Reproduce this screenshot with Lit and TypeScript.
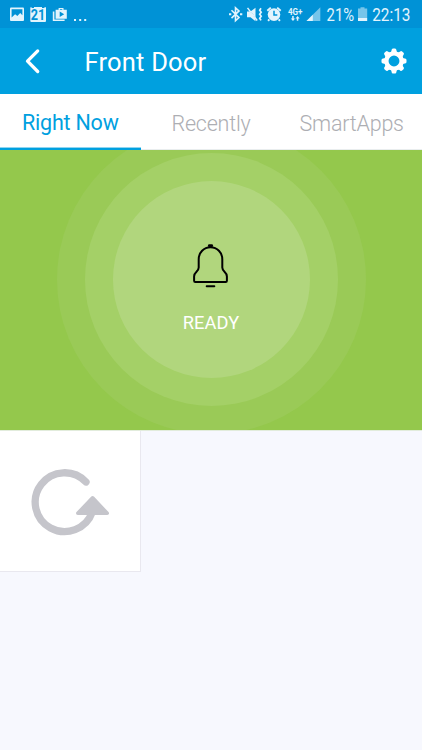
import { LitElement, html, css, svg } from "lit";
import { customElement, state } from "lit/decorators.js";

@customElement("status-bar")
class StatusBar extends LitElement {
  static styles = css`
    :host { display: flex; justify-content: space-between; height: 28px; background: #0092d6; }
    svg { display: block; }
    text { font-family: Roboto, sans-serif; fill: #e2f4fd; }
    .bold { font-weight: 700; }
    .date { fill: #0092d6; font-weight: 700; }
    .w { fill: #e2f4fd; }
    .blue { fill: #0092d6; }
    .dim { fill: #76c5ea; }
    .line { fill: none; stroke: #e2f4fd; }
  `;
  render() {
    return html`
      <svg width="100" height="28" viewBox="0 0 100 28">
        <rect class="w" x="10" y="7.5" width="14" height="13.5" rx="1" />
        <path class="blue" d="M11.6 9.2h10.8v6l-2.2-2.2-2.8 3-2.3-1.7-3.5 3.3z" />
        <rect class="w" x="30.3" y="7" width="15.7" height="15" rx="1" />
        <path class="blue" d="M31.5 7h2.5v1h-2.5zM42 7h2.5v1H42z" />
        <text class="date" x="30.8" y="19.8" font-size="14.5" textLength="14.5" lengthAdjust="spacingAndGlyphs">21</text>
        <path class="line" stroke-width="1.6" d="M53.6 11.5v8.8h11" />
        <path class="w" d="M55.6 9.8h3v-1.7h4.900v1.7h3.300v9H55.600z" />
        <path class="blue" d="M59.9 9.2h2.400v.7h-2.400zM59.700 11.400l4.500 2.800-4.500 2.900z" />
        <path class="w" d="M74 18.900h2v2H74zM79.200 18.900h2v2h-2zM84.200 18.900h2v2h-2z" />
      </svg>
      <svg width="200" height="28" viewBox="222 0 200 28">
        <path class="line" stroke-width="1.6" d="M231.500 10.300l7.500 7.300-3.500 3.200V7.800l3.500 3.100-7.500 7.200" />
        <path class="w" d="M229 13.300h2.300v2H229zM240 13.300h2.300v2H240z" />
        <path class="w" d="M247 11.400h3.500l5-3.700v13.500l-5-4H247z" />
        <path d="M246.800 6.800l10 13" stroke="#0092d6" stroke-width="1" />
        <path class="line" stroke-width="1.5" d="M247.500 7.900l9.700 12.600" />
        <path class="line" stroke-width="1.700" d="M261 8.200l-1.300 2 1.500 2-1.500 2 1.500 2-1.500 2 1.300 2.200" />
        <circle class="w" cx="274" cy="14.600" r="6.300" />
        <path class="line" stroke-width="1.900" d="M267.300 10.800l3.500-3.200M280.700 10.800l-3.500-3.200M269.300 19.400l-1.200 1.500M278.700 19.400l1.200 1.500" />
        <path d="M274 10.700v4.200h3.300" fill="none" stroke="#0092d6" stroke-width="1.500" />
        <text class="bold" x="288" y="14.600" font-size="8.800" textLength="14.500" lengthAdjust="spacingAndGlyphs">4G+</text>
        <path class="w" d="M290.800 18.400h1.400v-2.400h1.500v2.400h1.400l-2.100 2.500zM295.500 18.400l2.100-2.500 2.100 2.500h-1.400v2.400h-1.500v-2.400z" />
        <path class="dim" d="M306.500 21L320.300 7.200V21z" />
        <path class="w" d="M306.500 21l6.300-6.300V21z" />
        <text x="326.600" y="20.700" font-size="18" textLength="27.500" lengthAdjust="spacingAndGlyphs">21%</text>
        <path class="dim" d="M358 8.600h2.500V7.200h4v1.400h2.700V18H358z" />
        <path class="w" d="M358 18h9.200v3H358z" />
        <text x="372.200" y="20.700" font-size="18" textLength="38.200" lengthAdjust="spacingAndGlyphs">22:13</text>
      </svg>`;
  }
}

@customElement("app-header")
class AppHeader extends LitElement {
  static styles = css`
    :host { display: flex; align-items: center; height: 66px; background: #00a0df; color: #fff; }
    .back { margin-left: 20px; width: 64px; height: 66px; }
    h1 { margin: 0; padding: 1px 0 0 0.5px; flex: 1; font: 400 25.5px/66px Roboto, sans-serif; letter-spacing: 0.2px; }
    .gear { width: 26px; height: 26px; margin-right: 15.5px; }
  `;
  render() {
    const teeth = [0, 45, 90, 135, 180, 225, 270, 315];
    return html`
      <svg class="back" viewBox="20 28 64 66">
        <path d="M37.700 50.900L27.500 61.200L37.700 71.500" fill="none" stroke="#fff" stroke-width="3.300" stroke-linecap="round" stroke-linejoin="round" />
      </svg>
      <h1>Front Door</h1>
      <svg class="gear" viewBox="-13 -13 26 26">
        <circle r="7.600" fill="none" stroke="#fff" stroke-width="4.300" />
        ${teeth.map((a) => svg`<path transform="rotate(${a})" fill="#fff" d="M-3.500-8.500Q-2.500-9.300-2.400-11Q-2.300-12.500-1-12.500H1Q2.300-12.500 2.400-11Q2.500-9.300 3.500-8.500z" />`)}
      </svg>`;
  }
}

@customElement("tab-strip")
class TabStrip extends LitElement {
  @state() private active = 0;
  static styles = css`
    :host { display: grid; grid-template-columns: repeat(3, 1fr); height: 56px; background: #fff; }
    .tab { box-sizing: border-box; border: 0; padding: 4px 0 0; background: none; border-bottom: 1px solid #e9edee; font: 300 21.5px/51px Roboto, sans-serif; letter-spacing: -0.22px; color: #adaeb3; text-align: center; white-space: nowrap; }
    .active { border-bottom: 2px solid #00a0df; box-shadow: inset 0 -1px #8fd5f1; color: #00a0df; font-weight: 400; line-height: 50px; }
  `;
  render() {
    return html`${["Right Now", "Recently", "SmartApps"].map(
      (t, i) => html`<button class="tab ${i === this.active ? "active" : ""}" @click=${() => (this.active = i)}>${t}</button>`
    )}`;
  }
}

@customElement("alarm-panel")
class AlarmPanel extends LitElement {
  static styles = css`
    :host { display: flex; justify-content: center; align-items: flex-start; height: 280px; overflow: hidden; background: #94c84c; border-bottom: 1px solid #e2ecdc; background-clip: padding-box; }
    .ring { display: grid; place-items: center; border-radius: 50%; flex: none; }
    .outer { width: 309px; height: 309px; background: #9aca57; margin-top: -25px; }
    .middle { width: 253px; height: 253px; background: #a4d067; }
    .inner { width: 197px; height: 197px; background: #b1d67d; display: flex; flex-direction: column; align-items: center; }
    .bell { width: 40px; height: 48px; margin-top: 61px; }
    .label { margin-top: 22px; font: 400 18.3px/21px Roboto, sans-serif; letter-spacing: 0.1px; color: #fff; }
  `;
  render() {
    return html`<div class="ring outer"><div class="ring middle"><div class="ring inner">
      <svg class="bell" viewBox="191 242 40 48" fill="none" stroke="#000" stroke-width="2" stroke-linecap="round" stroke-linejoin="round">
        <path d="M198.700 259.500C198.700 252.500 203.800 247.200 210.500 247.200S222.300 252.500 222.300 259.500V267.500C222.300 272 226.900 271.500 226.900 276.500V280.800Q226.900 282 225.700 282H195.300Q194.100 282 194.100 280.800V276.500C194.100 271.500 198.700 272 198.700 267.500Z" />
        <path d="M206.700 286.300h7.600" />
        <path d="M209.300 245.700h2.400" stroke-width="2.800" />
      </svg>
      <div class="label">READY</div>
    </div></div></div>`;
  }
}

@customElement("app-root")
class AppRoot extends LitElement {
  static styles = css`
    :host { display: flex; flex-direction: column; height: 750px; overflow: hidden; background: #f7f8fe; }
    .tile { box-sizing: border-box; width: 141px; height: 141px; border: solid #e9e8ef; border-width: 0 1px 1px 0; background: #fff; }
    .refresh { display: block; width: 140px; height: 140px; }
  `;
  render() {
    return html`
      <status-bar></status-bar>
      <app-header></app-header>
      <tab-strip></tab-strip>
      <alarm-panel></alarm-panel>
      <div class="tile">
        <svg class="refresh" viewBox="0 431 140 140">
          <path d="M86 482A29.400 29.400 0 1 0 92.300 512" fill="none" stroke="#c5c5cb" stroke-width="7.300" stroke-linecap="round" />
          <path d="M92.600 497.800L107.200 513.300H77.800Z" fill="#c5c5cb" stroke="#c5c5cb" stroke-width="3.600" stroke-linejoin="round" />
        </svg>
      </div>`;
  }
}
